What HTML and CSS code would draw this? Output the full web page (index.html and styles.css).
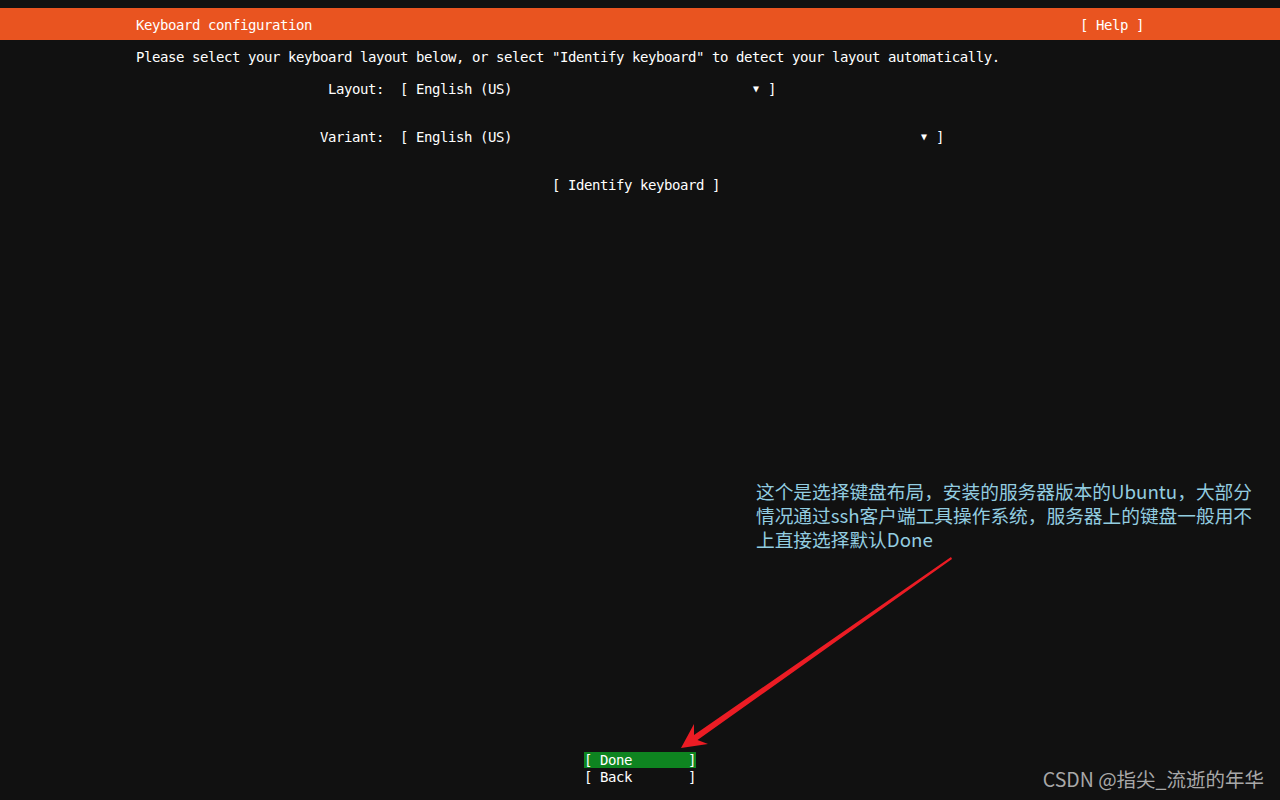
FILE: index.html
```html
<!doctype html>
<html>
<head>
<meta charset="utf-8">
<title>Keyboard configuration</title>
<link rel="stylesheet" href="styles.css">
</head>
<body>
	<div class="screen">
		<div class="topbar">
			<span>Keyboard configuration</span>
			<span>[ Help ]</span>
		</div>
		<div class="main">
			<div class="row">Please select your keyboard layout below, or select "Identify keyboard" to detect your layout automatically.</div>
			<div class="row field-row gap1">
				<span class="label">Layout:</span>
				<span class="select w-layout"><span>[ English (US)</span><span><span class="tri">▼</span> ]</span></span>
			</div>
			<div class="row field-row gap2">
				<span class="label">Variant:</span>
				<span class="select w-variant"><span>[ English (US)</span><span><span class="tri">▼</span> ]</span></span>
			</div>
			<div class="row ident gap2">[ Identify keyboard ]</div>
		</div>
		<div class="buttons">
			<div class="btn active"><span>[ Done</span><span>]</span></div>
			<div class="btn"><span>[ Back</span><span>]</span></div>
		</div>
	</div>

	<!-- annotation layer -->
	<div class="note">
		<div>这个是选择键盘布局，安装的服务器版本的Ubuntu，大部分</div>
		<div>情况通过ssh客户端工具操作系统，服务器上的键盘一般用不</div>
		<div>上直接选择默认Done</div>
	</div>
	<svg class="arrow" width="1280" height="800" viewBox="0 0 1280 800">
		<polygon points="952,559 951,557 694,735 694,724 681,748 708,744 697.5,740" fill="#ec1c24"/>
	</svg>
	<div class="mark">CSDN @指尖_流逝的年华</div>
</body>
</html>
```
FILE: styles.css
```css
*{
	margin:0px;
	padding:0px;
	box-sizing:border-box;
}
html,body{
	background:#111111;
}
body{
	width:1280px;
	height:800px;
	overflow:hidden;
	position:relative;
	color:#ffffff;
	font-family:"DejaVu Sans Mono","Liberation Mono",monospace;
	font-size:14px;
	letter-spacing:-0.43px;
	line-height:16px;
}
.screen{
	height:800px;
	padding-top:8px;
	display:flex;
	flex-direction:column;
}
.topbar{
	height:32px;
	background:#e95420;
	padding:9px 136px 0;
	display:flex;
	justify-content:space-between;
	white-space:pre;
}
.main{
	flex:1;
	padding:9px 136px 0;
}
.row{
	height:16px;
	white-space:pre;
}
.gap1{margin-top:16px;}
.gap2{margin-top:32px;}
.field-row{
	display:flex;
}
.label{
	width:248px;
	text-align:right;
	margin-right:16px;
}
.select{
	display:flex;
	justify-content:space-between;
}
.tri{
	display:inline-block;
	width:8px;
	font-size:10px;
	letter-spacing:0;
	text-align:center;
	vertical-align:top;
	line-height:15px;
}
.w-layout{width:376px;}
.w-variant{width:544px;}
.ident{
	padding-left:416px;
}
.buttons{
	display:flex;
	flex-direction:column;
	align-items:center;
	padding-bottom:15px;
}
.btn{
	width:112px;
	height:16px;
	display:flex;
	justify-content:space-between;
	white-space:pre;
}
.btn.active{
	background:#0e8420;
	margin-bottom:1px;
}
.note{
	position:absolute;
	left:756px;
	top:479px;
	font-family:"Noto Sans CJK SC","Noto Sans",sans-serif;
	font-size:18.7px;
	line-height:24px;
	letter-spacing:0;
	color:#93cde0;
	white-space:nowrap;
}
.note div{
	height:24px;
}
.arrow{
	position:absolute;
	left:0;
	top:0;
	pointer-events:none;
}
.mark{
	position:absolute;
	right:16px;
	top:767px;
	font-family:"Noto Sans CJK SC","Noto Sans",sans-serif;
	font-size:19.5px;
	line-height:24px;
	letter-spacing:0;
	color:#a8a8a8;
	white-space:nowrap;
}
```
